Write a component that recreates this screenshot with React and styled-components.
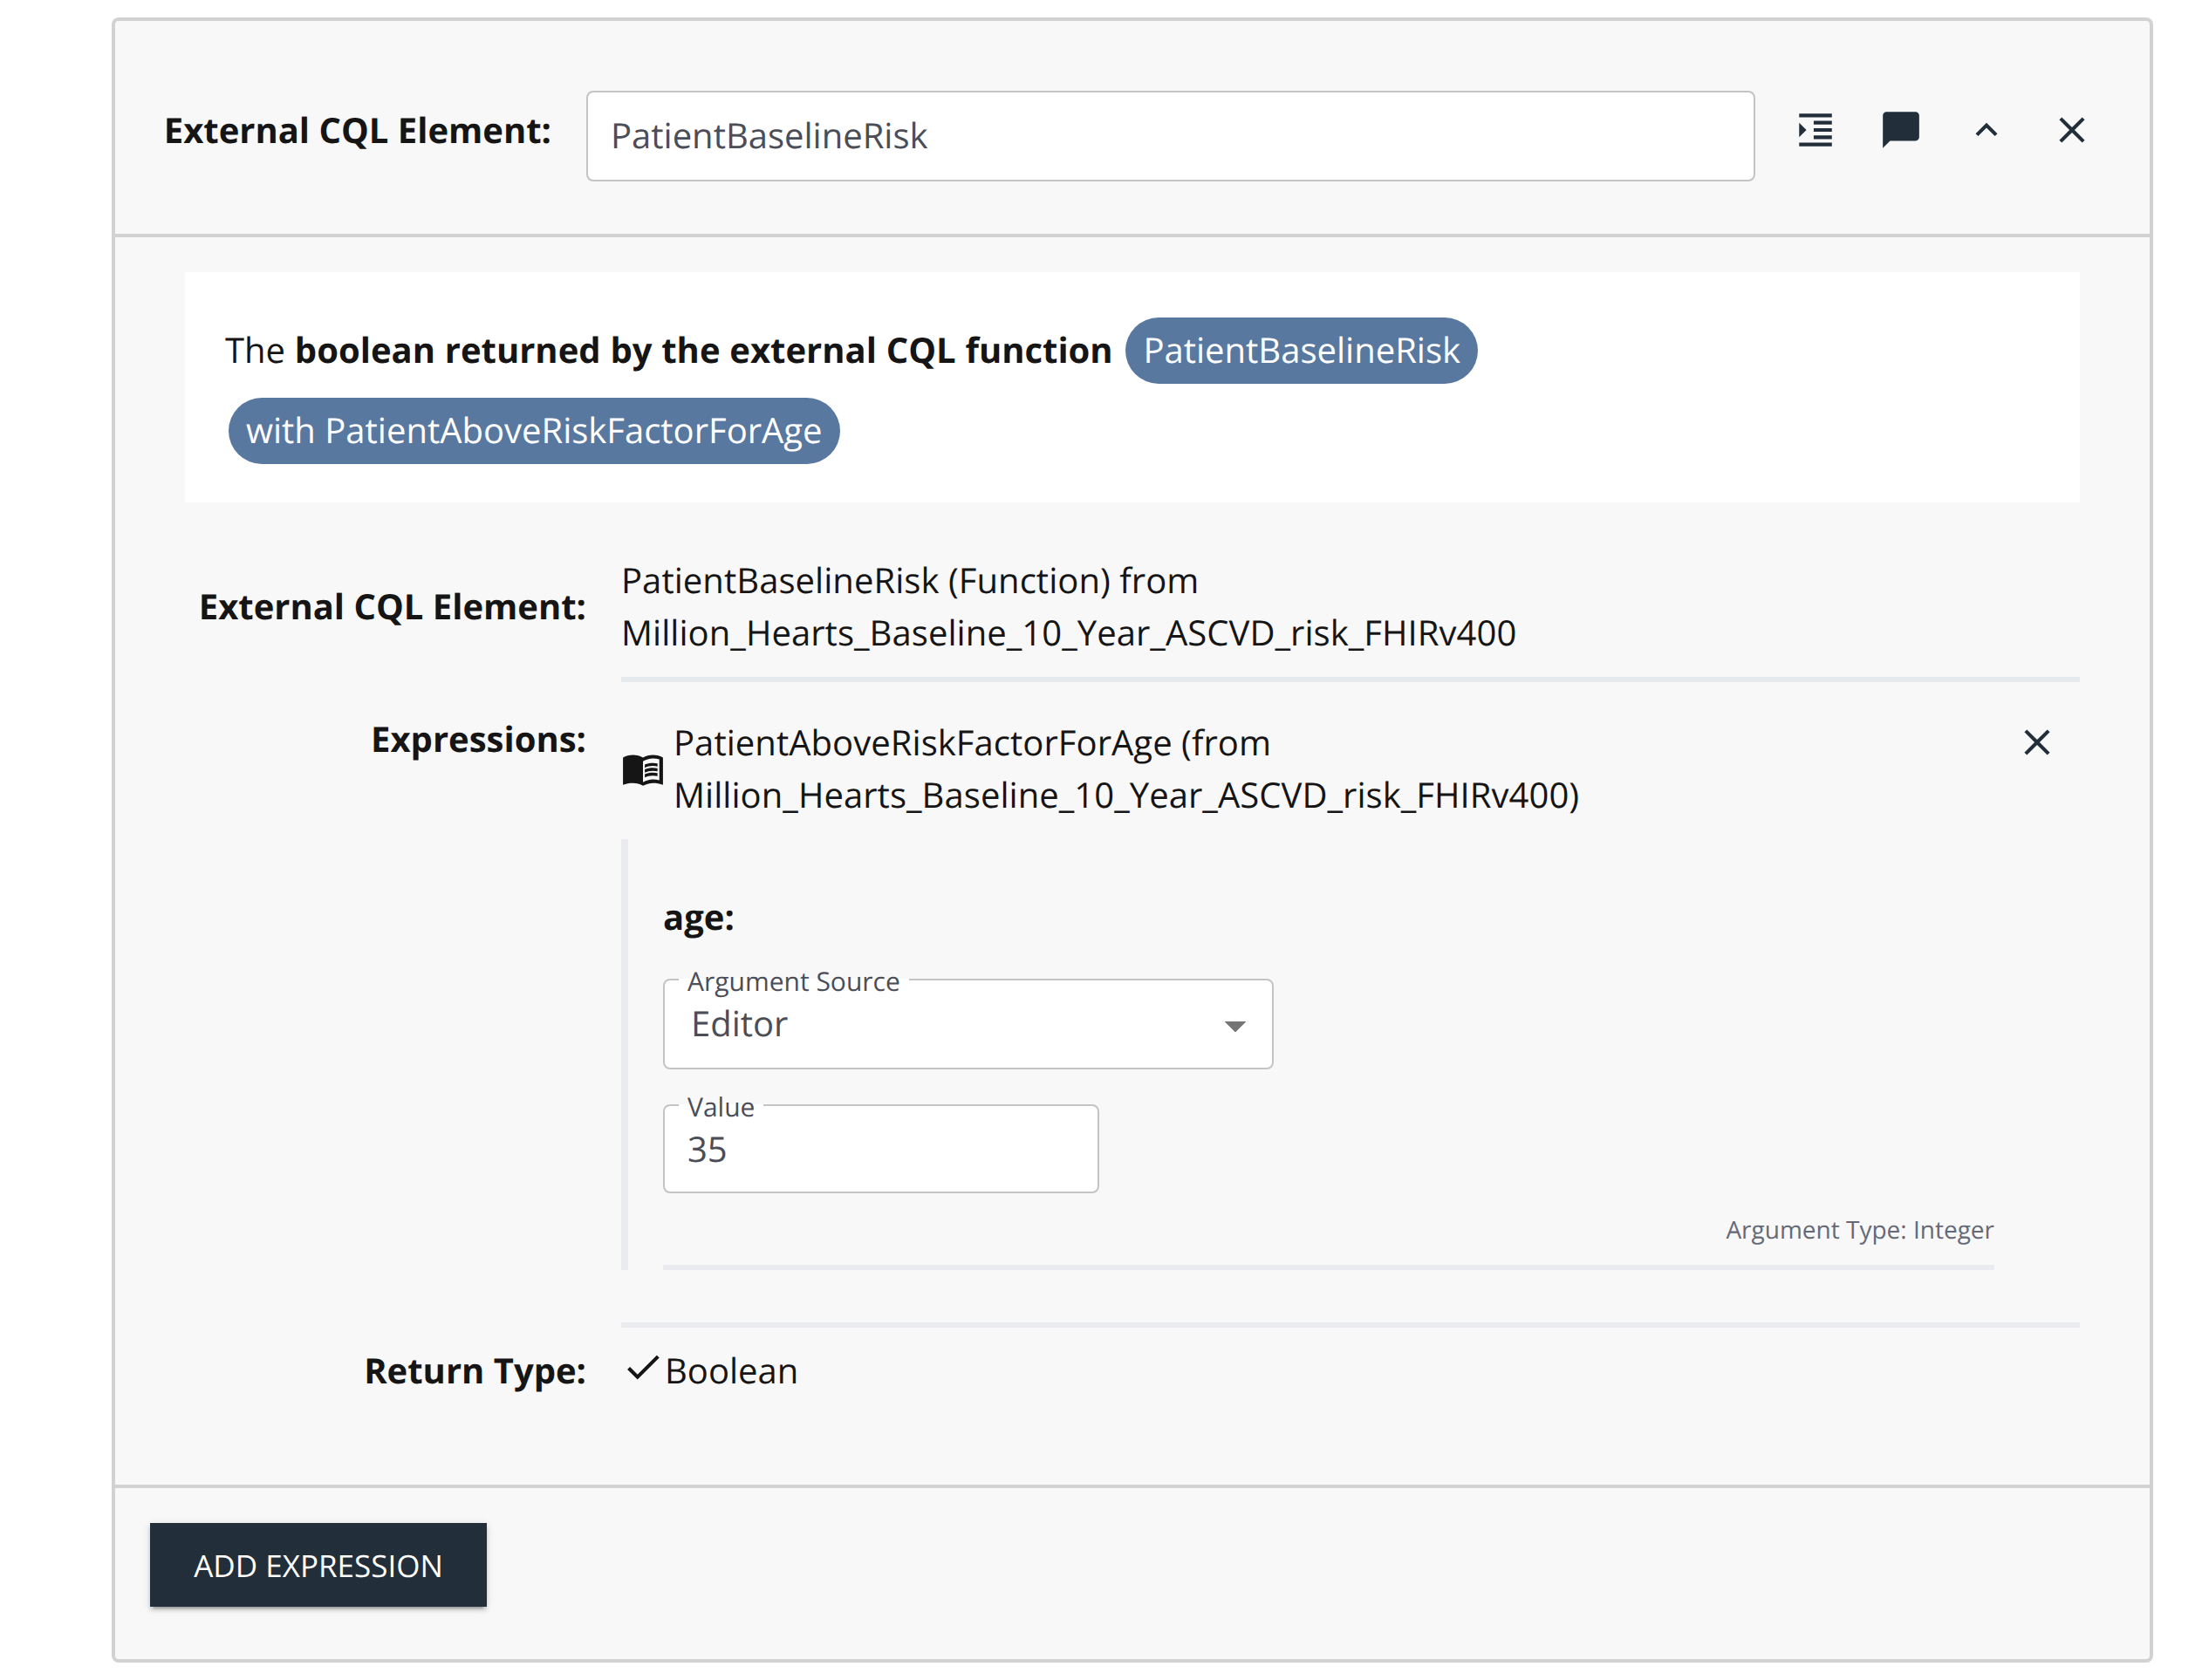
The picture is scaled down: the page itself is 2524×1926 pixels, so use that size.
import React from 'react';
import styled, { createGlobalStyle } from 'styled-components';

const GlobalStyle = createGlobalStyle`
  * { box-sizing: border-box; }
  body {
    margin: 0;
    background: #fff;
    color: #151515;
    font-family: 'Open Sans', 'Noto Sans', sans-serif;
    font-size: 40px;
    line-height: 60px;
    text-rendering: geometricPrecision;
  }
`;

const Page = styled.main`
  padding: 20px 56px 20px 128px;
`;

const Card = styled.section`
  height: 1886px;
  display: flex;
  flex-direction: column;
  border: 4px solid #d2d2d2;
  border-radius: 8px;
  background: #f8f8f8;
`;

const Header = styled.header`
  height: 248px;
  display: flex;
  align-items: flex-start;
  padding: 80px 40px 0 0;
  border-bottom: 4px solid #d2d2d2;
`;

const Label = styled.div`
  width: ${(p) => p.$width}px;
  flex: none;
  padding-top: ${(p) => p.$top || 0}px;
  text-align: right;
  font-weight: 700;
  white-space: nowrap;
`;

const NameInput = styled.input`
  flex: 1;
  min-width: 0;
  height: 104px;
  margin-left: 40px;
  padding: 0 26px 4px;
  border: 2px solid #c4c4c4;
  border-radius: 8px;
  background: #fff;
  color: #4b4d57;
  font: inherit;
  text-rendering: inherit;
`;

const Actions = styled.div`
  display: flex;
  margin: -4px 0 0 20px;
`;

const IconButton = styled.button`
  display: flex;
  padding: 24px;
  border: 0;
  background: none;
  color: #222f3a;
`;

const Icon = styled.svg`
  display: block;
  flex: none;
  width: ${(p) => p.$size || 50}px;
  height: ${(p) => p.$size || 50}px;
  fill: currentColor;
`;

const Body = styled.div`
  flex: 1;
  padding: 40px 80px 0;
`;

const Phrase = styled.div`
  height: 264px;
  padding: 44px 46px;
  background: #fff;
`;

const PhraseLine = styled.div`
  height: 92px;
  display: flex;
  align-items: center;
  white-space: pre;
`;

const PhraseText = styled.span`
  padding-bottom: 2px;
  word-spacing: 0.4px;
`;

const Pill = styled.span`
  margin: 0 4px;
  padding: 7px 20px 9px;
  border-radius: 38px;
  background: #59789f;
  color: #fff;
`;

const Row = styled.div`
  display: flex;
  align-items: ${(p) => p.$align || 'flex-start'};
`;

const Value = styled.div`
  flex: 1;
  margin-left: 40px;
  padding: ${(p) => p.$padding || 0};
  border-bottom: ${(p) => (p.$line ? `6px solid ${p.$line}` : '0')};
`;

const ElementSource = styled.div`
  letter-spacing: 0.05px;
`;

const Expression = styled.div`
  display: flex;
  align-items: center;
`;

const ExpressionText = styled(ElementSource)`
  flex: 1;
  margin-left: 10px;
`;

const DeleteButton = styled(IconButton)`
  align-self: flex-start;
  margin-top: -19px;
`;

const Arguments = styled.div`
  height: 494px;
  margin-top: 21px;
  padding: 59px 98px 0 40px;
  border-left: 8px solid #eaebef;
`;

const ArgumentItem = styled.div`
  height: 435px;
  border-bottom: 6px solid #eaebef;
`;

const ArgumentName = styled.div`
  font-weight: 700;
  margin-bottom: 41px;
`;

const Field = styled.div`
  position: relative;
  width: ${(p) => p.$width}px;
  height: ${(p) => p.$height}px;
  margin-bottom: 40px;
  padding: 0 12px 0 ${(p) => p.$indent}px;
  border: 2px solid #c4c4c4;
  border-radius: 8px;
  background: #fff;
  color: #4b4d57;
  display: flex;
  align-items: center;
  justify-content: space-between;
`;

const FieldLabel = styled.span`
  position: absolute;
  top: -22px;
  left: 16px;
  padding: 0 10px;
  font-size: 30px;
  line-height: 45px;
  background: linear-gradient(#fff, #fff) 0 20px / 100% 4px no-repeat;
`;

const FieldValue = styled.span`
  margin-bottom: ${(p) => p.$lift || 0}px;
`;

const Arrow = styled(Icon)`
  margin-top: 4px;
  color: #757575;
`;

const ArgumentType = styled.div`
  margin-top: -19px;
  text-align: right;
  color: #666a77;
  font-size: 28px;
  line-height: 42px;
`;

const CheckIcon = styled(Icon)`
  margin-top: -8px;
`;

const Footer = styled.footer`
  height: 200px;
  padding: 40px;
  border-top: 4px solid #d2d2d2;
`;

const AddButton = styled.button`
  display: block;
  width: 386px;
  height: 96px;
  padding: 4px 0 0;
  border: 0;
  background: #222f3a;
  color: #fff;
  font: inherit;
  font-size: 35px;
  text-rendering: inherit;
  text-transform: uppercase;
  white-space: nowrap;
  box-shadow:
    0 6px 2px -4px rgba(0, 0, 0, 0.2),
    0 4px 4px rgba(0, 0, 0, 0.14),
    0 2px 10px rgba(0, 0, 0, 0.12);
`;

const paths = {
  indent: 'M3 21h18v-2H3v2zM3 8v8l4-4-4-4zm8 9h10v-2H11v2zM3 3v2h18V3H3zm8 6h10V7H11v2zm0 4h10v-2H11v2z',
  comment: 'M20 2H4c-1.1 0-1.99.9-1.99 2L2 22l4-4h14c1.1 0 2-.9 2-2V4c0-1.1-.9-2-2-2z',
  collapse: 'M12 8l-6 6 1.41 1.41L12 10.83l4.59 4.58L18 14z',
  close: 'M19 6.41L17.59 5 12 10.59 6.41 5 5 6.41 10.59 12 5 17.59 6.41 19 12 13.41 17.59 19 19 17.59 13.41 12z',
  check: 'M9 16.17L4.83 12l-1.42 1.41L9 19 21 7l-1.41-1.41z',
  dropdown: 'M7 10l5 5 5-5z',
  book: 'M17.5 4.5c-1.95 0-4.05.4-5.5 1.5-1.45-1.1-3.55-1.5-5.5-1.5S2.45 4.9 1 6v15c1.6-.7 3.6-1 5.5-1 1.95 0 4.05.4 5.5 1.5 1.35-.85 3.8-1.5 5.5-1.5 1.9 0 3.9.3 5.5 1V6c-1.45-1.1-3.55-1.5-5.5-1.5zm3.5 14c-1.1-.35-2.3-.5-3.5-.5-1.7 0-4.15.65-5.5 1.5V8c1.35-.85 3.8-1.5 5.5-1.5 1.2 0 2.4.15 3.5.5v11.5z M17.5 10.6c.88 0 1.73.09 2.5.26V9.24c-.79-.15-1.64-.24-2.5-.24-1.7 0-3.24.29-4.5.83v1.76c1.13-.64 2.7-.99 4.5-.99zM13 12.49v1.76c1.13-.64 2.7-.99 4.5-.99.88 0 1.73.09 2.5.26V11.9c-.79-.15-1.64-.24-2.5-.24-1.7 0-3.24.3-4.5.83zM17.5 14.33c-1.7 0-3.24.29-4.5.83v1.76c1.13-.64 2.7-.99 4.5-.99.88 0 1.73.09 2.5.26v-1.62c-.79-.16-1.64-.24-2.5-.24z',
};

const Glyph = ({ name, as: Base = Icon, size }) => (
  <Base viewBox="0 0 24 24" $size={size} aria-hidden="true">
    <path d={paths[name]} />
  </Base>
);

const headerActions = [
  ['indent', 'Indent'],
  ['comment', 'Comment'],
  ['collapse', 'Collapse'],
  ['close', 'Delete element'],
];

export default function App() {
  return (
    <Page>
      <GlobalStyle />
      <Card>
        <Header>
          <Label $width={500} $top={15}>External CQL Element:</Label>
          <NameInput aria-label="Element name" defaultValue="PatientBaselineRisk" />
          <Actions>
            {headerActions.map(([name, label]) => (
              <IconButton key={name} aria-label={label}>
                <Glyph name={name} />
              </IconButton>
            ))}
          </Actions>
        </Header>
        <Body>
          <Phrase>
            <PhraseLine>
              <PhraseText>
                The <b>boolean returned by the external CQL function</b>{' '}
              </PhraseText>
              <Pill>PatientBaselineRisk</Pill>
            </PhraseLine>
            <PhraseLine>
              <Pill>with PatientAboveRiskFactorForAge</Pill>
            </PhraseLine>
          </Phrase>

          <Row>
            <Label $width={460} $top={89}>External CQL Element:</Label>
            <Value $padding="59px 0 21px" $line="#e7eaed">
              <ElementSource>
                PatientBaselineRisk (Function) from
                <br />
                Million_Hearts_Baseline_10_Year_ASCVD_risk_FHIRv400
              </ElementSource>
            </Value>
          </Row>

          <Row>
            <Label $width={460} $top={35}>Expressions:</Label>
            <Value $padding="39px 0 60px" $line="#eaebef">
              <Expression>
                <Glyph name="book" />
                <ExpressionText>
                  PatientAboveRiskFactorForAge (from
                  <br />
                  Million_Hearts_Baseline_10_Year_ASCVD_risk_FHIRv400)
                </ExpressionText>
                <DeleteButton aria-label="Delete expression">
                  <Glyph name="close" />
                </DeleteButton>
              </Expression>
              <Arguments>
                <ArgumentItem>
                  <ArgumentName>age:</ArgumentName>
                  <Field $width={700} $height={104} $indent={30}>
                    <FieldLabel>Argument Source</FieldLabel>
                    <FieldValue $lift={3}>Editor</FieldValue>
                    <Glyph name="dropdown" as={Arrow} size={60} />
                  </Field>
                  <Field $width={500} $height={102} $indent={26}>
                    <FieldLabel>Value</FieldLabel>
                    <FieldValue>35</FieldValue>
                  </Field>
                  <ArgumentType>Argument Type: Integer</ArgumentType>
                </ArgumentItem>
              </Arguments>
            </Value>
          </Row>

          <Row>
            <Label $width={460} $top={19}>Return Type:</Label>
            <Value $padding="19px 0 0">
              <Row $align="center">
                <Glyph name="check" as={CheckIcon} />
                <span>Boolean</span>
              </Row>
            </Value>
          </Row>
        </Body>
        <Footer>
          <AddButton>Add expression</AddButton>
        </Footer>
      </Card>
    </Page>
  );
}
